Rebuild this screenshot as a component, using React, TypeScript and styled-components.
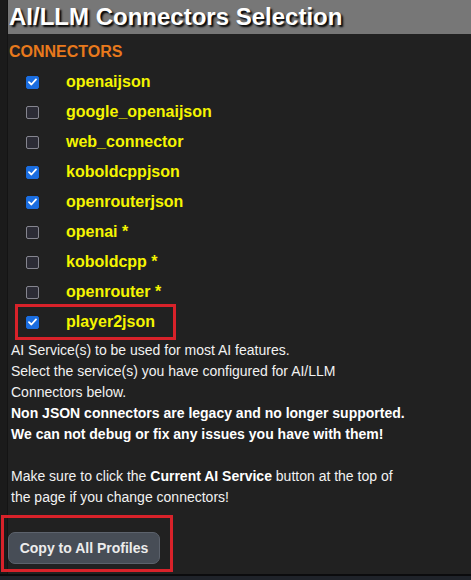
import React from "react";
import styled, { createGlobalStyle } from "styled-components";

const GlobalStyle = createGlobalStyle`
  html, body {
    margin: 0;
    padding: 0;
    background: #1b1b1b;
    font-family: "Liberation Sans", Arial, sans-serif;
  }
  body { min-height: 580px; }
`;

const Page = styled.div`
  display: flex;
  flex-direction: column;
  min-height: 580px;
`;

const Body = styled.div`
  padding-left: 7px;
  display: flex;
`;

const Panel = styled.section`
  flex: 1;
  background: #212121;
  border-left: 1px solid #141414;
  padding-bottom: 5px;
`;

const Header = styled.h1`
  margin: 0;
  height: 34px;
  background: #777777;
  color: #ffffff;
  font-size: 24px;
  font-weight: bold;
  line-height: 34px;
  padding-left: 1px;
  text-shadow: 2px 2px 2px #000000;
  white-space: nowrap;
`;

const Heading = styled.h2`
  margin: 9px 0 0 1px;
  font-size: 16px;
  line-height: 18px;
  font-weight: bold;
  color: #e8791c;
`;

const List = styled.div`
  display: flex;
  flex-direction: column;
  padding-top: 6px;
`;

const Row = styled.label<{ $highlight?: boolean }>`
  display: flex;
  align-items: center;
  height: 30px;
  width: fit-content;
  margin-left: 10px;
  padding: 0 18px 0 8px;
  box-sizing: border-box;
  outline: ${(p) => (p.$highlight ? "3px solid #d8222a" : "none")};
  cursor: pointer;
`;

const Box = styled.span<{ $checked: boolean }>`
  width: 13px;
  height: 13px;
  box-sizing: border-box;
  border-radius: 2px;
  flex: none;
  display: flex;
  align-items: center;
  justify-content: center;
  background: ${(p) => (p.$checked ? "#1a6de0" : "#2c2c36")};
  border: 1px solid ${(p) => (p.$checked ? "#1a6de0" : "#85858f")};
`;

const Label = styled.span`
  margin-left: 27px;
  font-size: 16px;
  font-weight: bold;
  color: #f5f500;
  white-space: nowrap;
`;

const Description = styled.div`
  margin: 3px 0 0 3px;
  font-size: 14px;
  line-height: 21px;
  color: #f2f2f2;
`;

const Line = styled.div<{ $bold?: boolean }>`
  min-height: 21px;
  white-space: nowrap;
  font-weight: ${(p) => (p.$bold ? "bold" : "normal")};
  color: ${(p) => (p.$bold ? "#ffffff" : "#f2f2f2")};
`;

const Strong = styled.b`
  font-weight: bold;
  color: #ffffff;
`;

const ButtonFrame = styled.div`
  width: fit-content;
  margin: 10px 0 0 -4px;
  padding: 14px 10px 5px 4px;
  outline: 3px solid #d8222a;
`;

const Button = styled.button`
  display: block;
  width: 152px;
  height: 32px;
  padding: 0;
  border-radius: 7px;
  border: 1px solid #5c626c;
  background: #474d56;
  color: #ececec;
  font-family: "Liberation Sans", Arial, sans-serif;
  font-size: 14px;
  font-weight: bold;
  cursor: pointer;
`;

const BottomBar = styled.div`
  flex: 1;
  border-top: 2px solid #0b0b0d;
  background: #1f232a;
`;

const Check = () => (
  <svg width="9" height="8" viewBox="0 0 9 8" aria-hidden="true">
    <path d="M1 4.2 L3.4 6.5 L8 1.4" fill="none" stroke="#ffffff" strokeWidth="1.8" strokeLinecap="round" strokeLinejoin="round" />
  </svg>
);

const connectors: { name: string; checked: boolean; highlight?: boolean }[] = [
  { name: "openaijson", checked: true },
  { name: "google_openaijson", checked: false },
  { name: "web_connector", checked: false },
  { name: "koboldcppjson", checked: true },
  { name: "openrouterjson", checked: true },
  { name: "openai *", checked: false },
  { name: "koboldcpp *", checked: false },
  { name: "openrouter *", checked: false },
  { name: "player2json", checked: true, highlight: true },
];

export default function App() {
  return (
    <>
      <GlobalStyle />
      <Page>
        <Body>
          <Panel>
            <Header>AI/LLM Connectors Selection</Header>
            <Heading>CONNECTORS</Heading>
            <List>
              {connectors.map((c) => (
                <Row key={c.name} $highlight={c.highlight}>
                  <Box $checked={c.checked}>{c.checked && <Check />}</Box>
                  <Label>{c.name}</Label>
                </Row>
              ))}
            </List>
            <Description>
              <Line>AI Service(s) to be used for most AI features.</Line>
              <Line>Select the service(s) you have configured for AI/LLM</Line>
              <Line>Connectors below.</Line>
              <Line $bold>Non JSON connectors are legacy and no longer supported.</Line>
              <Line $bold>We can not debug or fix any issues you have with them!</Line>
              <Line />
              <Line>
                Make sure to click the <Strong>Current AI Service</Strong> button at the top of
              </Line>
              <Line>the page if you change connectors!</Line>
            </Description>
            <ButtonFrame>
              <Button>Copy to All Profiles</Button>
            </ButtonFrame>
          </Panel>
        </Body>
        <BottomBar />
      </Page>
    </>
  );
}
